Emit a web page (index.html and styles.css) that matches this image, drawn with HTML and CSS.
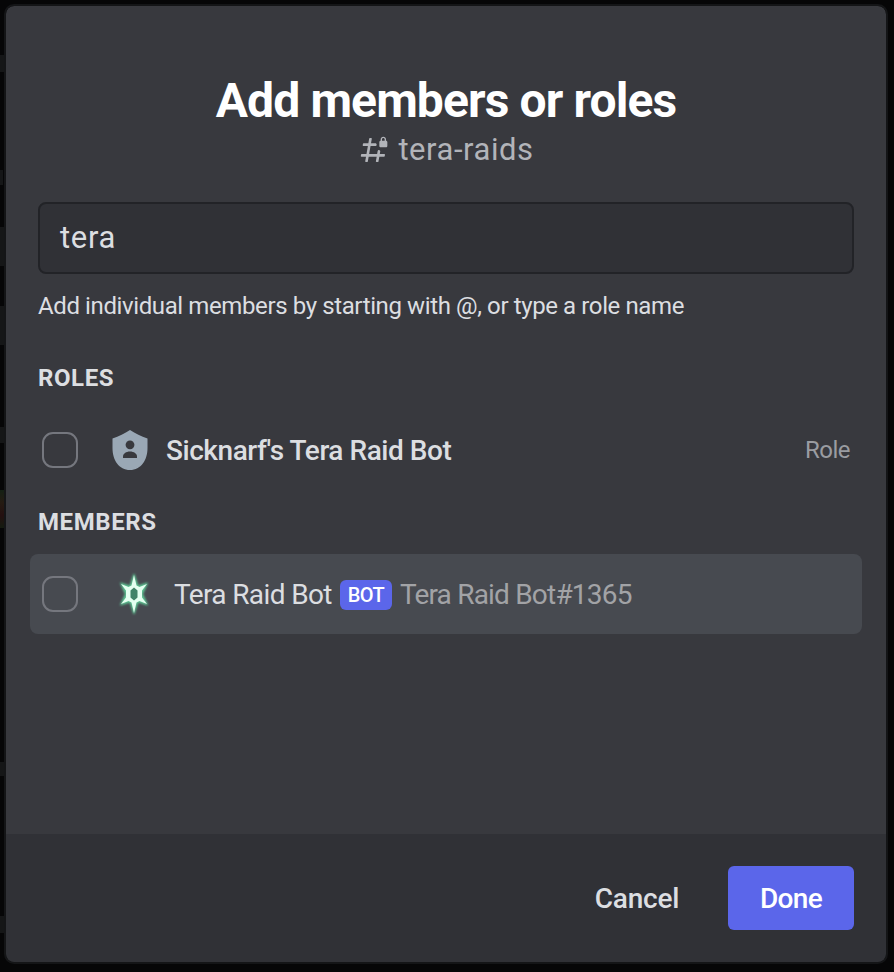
FILE: index.html
```html
<!DOCTYPE html>
<html lang="en">
<head>
<meta charset="utf-8">
<title>Add members or roles</title>
<link rel="stylesheet" href="styles.css">
</head>
<body>
<div class="backdrop" aria-hidden="true">
  <i class="edge e1"></i><i class="edge e2"></i><i class="edge e3"></i><i class="edge e4"></i><i class="edge e5"></i><i class="edge e6"></i><i class="edge e7"></i><i class="edge e8"></i>
</div>
<main class="modal">
  <header class="header">
    <h1 class="title">Add members or roles</h1>
    <div class="channel">
      <svg class="hash" viewBox="0 0 24 24" fill="currentColor"><path d="M14 8C14 7.448 13.552 7 13 7H9.76L10.366 3.587C10.42 3.281 10.185 3 9.873 3H8.889C8.647 3 8.439 3.174 8.397 3.413L7.76 7H4.18C3.937 7 3.729 7.175 3.688 7.414L3.513 8.414C3.459 8.72 3.694 9 4.005 9H7.41L6.35 15H2.77C2.527 15 2.319 15.175 2.278 15.414L2.103 16.414C2.049 16.72 2.284 17 2.595 17H6L5.394 20.413C5.34 20.719 5.575 21 5.887 21H6.871C7.113 21 7.321 20.826 7.363 20.587L8 17H14L13.394 20.413C13.34 20.719 13.575 21 13.887 21H14.871C15.113 21 15.321 20.826 15.363 20.587L16 17H19.58C19.823 17 20.031 16.825 20.072 16.586L20.247 15.586C20.301 15.28 20.066 15 19.755 15H16.35L16.676 13.156C16.782 12.553 16.319 12 15.706 12C15.229 12 14.82 12.343 14.737 12.813L14.35 15H8.35L9.41 9H13C13.552 9 14 8.552 14 8Z"/><path fill-rule="evenodd" d="M21.025 5V4C21.025 2.88 20.05 2 19 2C17.95 2 17 2.88 17 4V5C16.448 5 16 5.448 16 6V9C16 9.552 16.448 10 17 10H21C21.552 10 22 9.552 22 9V5.975C22 5.437 21.564 5 21.025 5ZM20 5H18V4C18 3.429 18.467 3 19 3C19.533 3 20 3.429 20 4V5Z"/></svg>
      <span class="channel-name">tera-raids</span>
    </div>
  </header>
  <div class="search"><span class="query">tera</span></div>
  <p class="hint"><span>Add individual members by starting with @, or type a role name</span></p>
  <h2 class="section"><span class="roles">ROLES</span></h2>
  <div class="row">
    <span class="check"></span>
    <svg class="shield" viewBox="0 0 36 40"><path fill="#9aa8b5" d="M18 0C23.500 3.700 29 6.400 35.500 8.600V18C35.500 30 29 40 18 40S.500 30 .500 18V8.600C7 6.400 12.500 3.700 18 0Z"/><circle cx="18" cy="14.800" r="4.400" fill="#38393e"/><path fill="#38393e" d="M11 28v-1.200c0-3.100 3-5.200 7-5.200s7 2.100 7 5.200V28Z"/></svg>
    <span class="role-name">Sicknarf's Tera Raid Bot</span>
    <span class="kind">Role</span>
  </div>
  <h2 class="section"><span class="members">MEMBERS</span></h2>
  <div class="row selected">
    <span class="check"></span>
    <svg class="star" viewBox="0 0 48 48"><defs><filter id="glow" x="-50%" y="-50%" width="200%" height="200%"><feGaussianBlur stdDeviation="1.100"/></filter><filter id="soft"><feGaussianBlur stdDeviation=".400"/></filter></defs><path class="halo" filter="url(#glow)" d="M24 4L28 16L37.500 13L32.500 24L37.500 35L28 32L24 44L20 32L10.500 35L15.500 24L10.500 13L20 16Z"/><g filter="url(#soft)"><path class="ray" d="M24 5L26.500 15.500L29.500 17L37 14L32 20.500V27.500L37 34L29.500 31L26.500 32.500L24 43L21.500 32.500L18.500 31L11 34L16 27.500V20.500L11 14L18.500 17L21.500 15.500Z"/><path class="core" d="M24 17.500L20.500 20.500V27.500L24 30.500L27.500 27.500V20.500Z"/></g></svg>
    <span class="member-name">Tera Raid Bot</span>
    <span class="badge"><span>BOT</span></span>
    <span class="tag">Tera Raid Bot#1365</span>
  </div>
  <footer class="footer">
    <button class="cancel"><span>Cancel</span></button>
    <button class="done"><span>Done</span></button>
  </footer>
</main>
</body>
</html>
```

FILE: styles.css
```css
* { box-sizing: border-box; }
body {
  margin: 0;
  height: 972px;
  padding: 6px 8px 10px 6px;
  overflow: hidden;
  background: #060607;
  font-family: Roboto, "Noto Sans", sans-serif;
  color: #dcdee1;
}
span { white-space: nowrap; }
.backdrop { position: absolute; left: 0; top: 0; width: 4px; height: 972px; overflow: hidden; }
.edge { position: absolute; left: 0; width: 4px; background: #151617; }
.e1 { top: 55px; height: 17px; }
.e2 { top: 170px; height: 15px; width: 3px; }
.e3 { top: 227px; height: 39px; }
.e4 { top: 306px; height: 39px; }
.e5 { top: 427px; height: 16px; }
.e6 { top: 490px; height: 38px; background: linear-gradient(#142014, #251b12, #241010, #141b10); }
.e7 { top: 762px; height: 14px; }
.e8 { top: 916px; height: 17px; }
.modal {
  position: relative;
  display: flex;
  flex-direction: column;
  height: 956px;
  border-radius: 8px;
  overflow: hidden;
  background: #38393e;
  outline: 2px solid #141517;
}
h1, h2, p { margin: 0; }
.header { padding-top: 62px; height: 196px; display: flex; flex-direction: column; align-items: center; }
.title { font-size: 48px; line-height: 66px; height: 64px; font-weight: 700; color: #fff; letter-spacing: -.88px; white-space: nowrap; }
.channel { display: flex; align-items: center; height: 36px; color: #b2b4b9; font-size: 31px; gap: 8px; }
.hash { width: 32px; height: 32px; }
.channel-name { letter-spacing: .55px; line-height: 36px; height: 36px; }
.search { height: 72px; margin: 0 32px; border: 2px solid #222327; border-radius: 8px; background: #303136; padding: 0 20px; font-size: 31px; line-height: 68px; }
.query { letter-spacing: .65px; }
.hint { margin: 16px 32px 0; font-size: 24px; line-height: 32px; letter-spacing: -.39px; }
.section { margin-left: 32px; font-size: 24px; font-weight: 700; line-height: 32px; letter-spacing: .6px; }
.hint + .section { margin-top: 40px; }
.row { height: 80px; display: flex; align-items: center; margin: 16px 24px 0; padding: 0 12px; border-radius: 8px; font-size: 28px; }
.row + .section { margin-top: 16px; }
.selected { background: #474a50; }
.check { width: 36px; height: 36px; border: 2px solid #75777e; border-radius: 11px; flex: none; }
.shield { width: 36px; height: 40px; margin-left: 34px; flex: none; }
.role-name { margin-left: 18px; font-weight: 500; letter-spacing: -.45px; }
.kind { margin-left: auto; color: #9a9ca1; font-size: 24px; letter-spacing: -.5px; }
.star { width: 48px; height: 48px; margin-left: 32px; flex: none; }
.halo { fill: #5fc795; stroke: #5fc795; stroke-width: 1; }
.ray { fill: #e4fff0; }
.core { fill: #3f8467; }
.member-name { margin-left: 16px; letter-spacing: -.62px; }
.badge { width: 52px; height: 30px; margin: 2px 0 0 8px; border-radius: 6px; background: #5b66ea; color: #fff; font-size: 20px; font-weight: 500; letter-spacing: -.6px; display: flex; align-items: center; justify-content: center; }
.tag { margin-left: 8px; color: #a2a3a6; letter-spacing: -.8px; }
.footer { margin-top: auto; height: 128px; padding: 0 32px; display: flex; justify-content: flex-end; align-items: center; background: #303136; }
button { height: 64px; border: 0; padding: 0; font: 500 28px/66px Roboto, sans-serif; color: #fff; background: none; }
.cancel { width: 130px; margin-right: 26px; color: #dcdee1; letter-spacing: -.2px; }
.done { width: 126px; border-radius: 6px; background: #5b66ea; letter-spacing: -.7px; }
```
